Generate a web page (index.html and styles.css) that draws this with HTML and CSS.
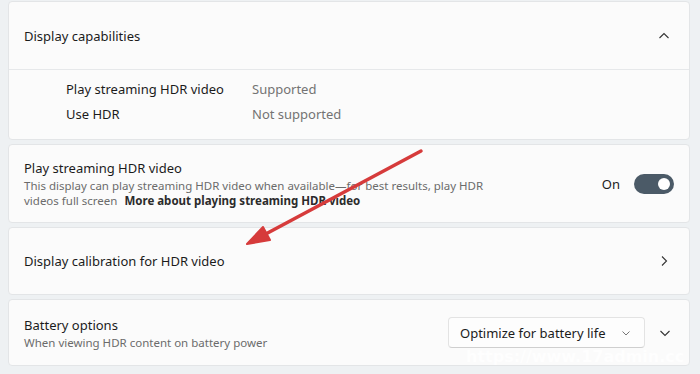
FILE: index.html
```html
<!DOCTYPE html>
<html>
<head>
<meta charset="utf-8">
<link rel="stylesheet" href="styles.css">
</head>
<body>
<div class="page">
  <section class="card expander">
    <div class="exp-head">
      <span class="title">Display capabilities</span>
      <svg class="chev" width="12" height="12" viewBox="0 0 12 12"><path d="M1.5 8 L6 3.5 L10.5 8" fill="none" stroke="#333" stroke-width="1.1"/></svg>
    </div>
    <div class="exp-body">
      <div class="kv"><span class="k">Play streaming HDR video</span><span class="v">Supported</span></div>
      <div class="kv"><span class="k">Use HDR</span><span class="v">Not supported</span></div>
    </div>
  </section>

  <section class="card row tall">
    <div class="texts">
      <div class="title">Play streaming HDR video</div>
      <div class="desc">This display can play streaming HDR video when available—for best results, play HDR<br>videos full screen <b class="link">More about playing streaming HDR video</b></div>
    </div>
    <div class="ctrl">
      <span class="state">On</span>
      <span class="toggle"><span class="knob"></span></span>
    </div>
  </section>

  <section class="card row mid">
    <div class="title">Display calibration for HDR video</div>
    <svg class="chev" width="12" height="12" viewBox="0 0 12 12"><path d="M4 1.5 L8.5 6 L4 10.5" fill="none" stroke="#333" stroke-width="1.1"/></svg>
  </section>

  <section class="card row mid4">
    <div class="texts">
      <div class="title">Battery options</div>
      <div class="desc">When viewing HDR content on battery power</div>
    </div>
    <div class="ctrl">
      <div class="combo">
        <span>Optimize for battery life</span>
        <svg width="10" height="10" viewBox="0 0 10 10"><path d="M1.5 3.5 L5 7 L8.5 3.5" fill="none" stroke="#777" stroke-width="1"/></svg>
      </div>
      <svg class="chev" width="12" height="12" viewBox="0 0 12 12"><path d="M1.5 4 L6 8.5 L10.5 4" fill="none" stroke="#333" stroke-width="1.1"/></svg>
    </div>
  </section>
</div>

<svg class="arrow" width="700" height="374" viewBox="0 0 700 374">
  <line x1="421" y1="151" x2="262" y2="236" stroke="#d63b3b" stroke-width="3.5" stroke-linecap="round"/>
  <path d="M247 244 L263 227 L270 240 Z" fill="#d63b3b" stroke="#d63b3b" stroke-width="2" stroke-linejoin="round"/>
</svg>
<div class="watermark">https://www.17admin.cc</div>
</body>
</html>
```
FILE: styles.css
```css
html, body {
  margin: 0;
  padding: 0;
  background: #eef1f3;
  font-family: "Noto Sans", "Open Sans", sans-serif;
  color: #1b1b1b;
  overflow: hidden;
}
.page {
  width: 682px;
  margin-left: 8px;
  padding-top: 1px;
  display: flex;
  flex-direction: column;
  gap: 4px;
}
.card {
  background: #fbfbfb;
  border: 1px solid #e3e5e7;
  border-radius: 4px;
  box-sizing: border-box;
}
.title {
  font-size: 13px;
  color: #1b1b1b;
}
.chev { display: block; }
.exp-head {
  height: 68px;
  box-sizing: border-box;
  padding: 0 19px 0 15px;
  display: flex;
  align-items: center;
  justify-content: space-between;
  border-bottom: 1px solid #e6e8ea;
}
.exp-body {
  height: 69px;
  box-sizing: border-box;
  padding: 10px 0 0 57px;
  display: flex;
  flex-direction: column;
  gap: 6px;
}
.kv {
  display: flex;
  font-size: 13px;
  line-height: 19px;
}
.k { width: 186px; }
.v { color: #737373; }
.row {
  display: flex;
  align-items: center;
  justify-content: space-between;
  padding: 0 19px 0 15px;
}
.tall { height: 79px; padding-right: 15px; }
.mid { height: 68px; }
.mid4 { height: 67px; padding-right: 18px; }
.texts { display: flex; flex-direction: column; }
.tall .texts { margin-top: -1px; }
.desc {
  font-size: 11.5px;
  line-height: 15px;
  color: #6b6b6b;
  margin-top: 1px;
}
.link { color: #2b2b2b; font-weight: 700; margin-left: 4px; }
.ctrl {
  display: flex;
  align-items: center;
}
.state {
  font-size: 13px;
  margin-right: 14px;
}
.toggle {
  width: 40px;
  height: 20px;
  border-radius: 10px;
  background: #4b5a67;
  position: relative;
  display: block;
}
.knob {
  position: absolute;
  right: 4px;
  top: 4px;
  width: 12px;
  height: 12px;
  border-radius: 50%;
  background: #fff;
}
.combo {
  width: 197px;
  height: 31px;
  box-sizing: border-box;
  border: 1px solid #e3e3e3;
  border-bottom-color: #cfcfcf;
  border-radius: 4px;
  background: #fdfdfd;
  display: flex;
  align-items: center;
  justify-content: space-between;
  padding: 0 13px 0 11px;
  font-size: 13px;
  margin-right: 14px;
}
.combo svg { display: block; }
.arrow {
  position: absolute;
  left: 0;
  top: 0;
  pointer-events: none;
}
.watermark {
  position: absolute;
  left: 466px;
  top: 347px;
  font-family: "DejaVu Sans", sans-serif;
  font-weight: 700;
  font-size: 16px;
  color: rgba(255,255,255,0.75);
  letter-spacing: 0;
}
```
